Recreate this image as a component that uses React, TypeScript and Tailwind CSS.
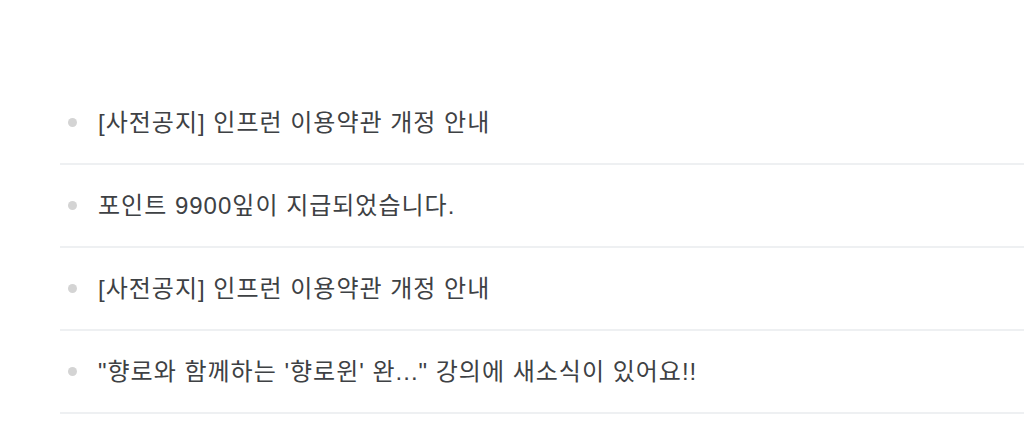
const notices = [
	"[사전공지] 인프런 이용약관 개정 안내",
	"포인트 9900잎이 지급되었습니다.",
	"[사전공지] 인프런 이용약관 개정 안내",
	"\"향로와 함께하는 '향로윈' 완...\" 강의에 새소식이 있어요!!",
];

const App = () => {
	return (
		<div className="w-[1024px] h-[427px] bg-white pt-[82px] pl-[60px] overflow-hidden font-['Liberation_Sans','Noto_Sans_CJK_KR',sans-serif]">
			<ul>
				{notices.map((notice, index) => (
					<li
						key={`notice-${index}`}
						className="flex items-center h-[83px] border-b-2 border-[#eef0f2] pl-[8px]">
						<span className="w-[9px] h-[9px] rounded-full bg-[#d4d4d4] shrink-0" />
						<span className="ml-[21px] text-[24px] text-[#3e4144] tracking-[1px]">
							{notice}
						</span>
					</li>
				))}
			</ul>
		</div>
	);
};

export default App;
